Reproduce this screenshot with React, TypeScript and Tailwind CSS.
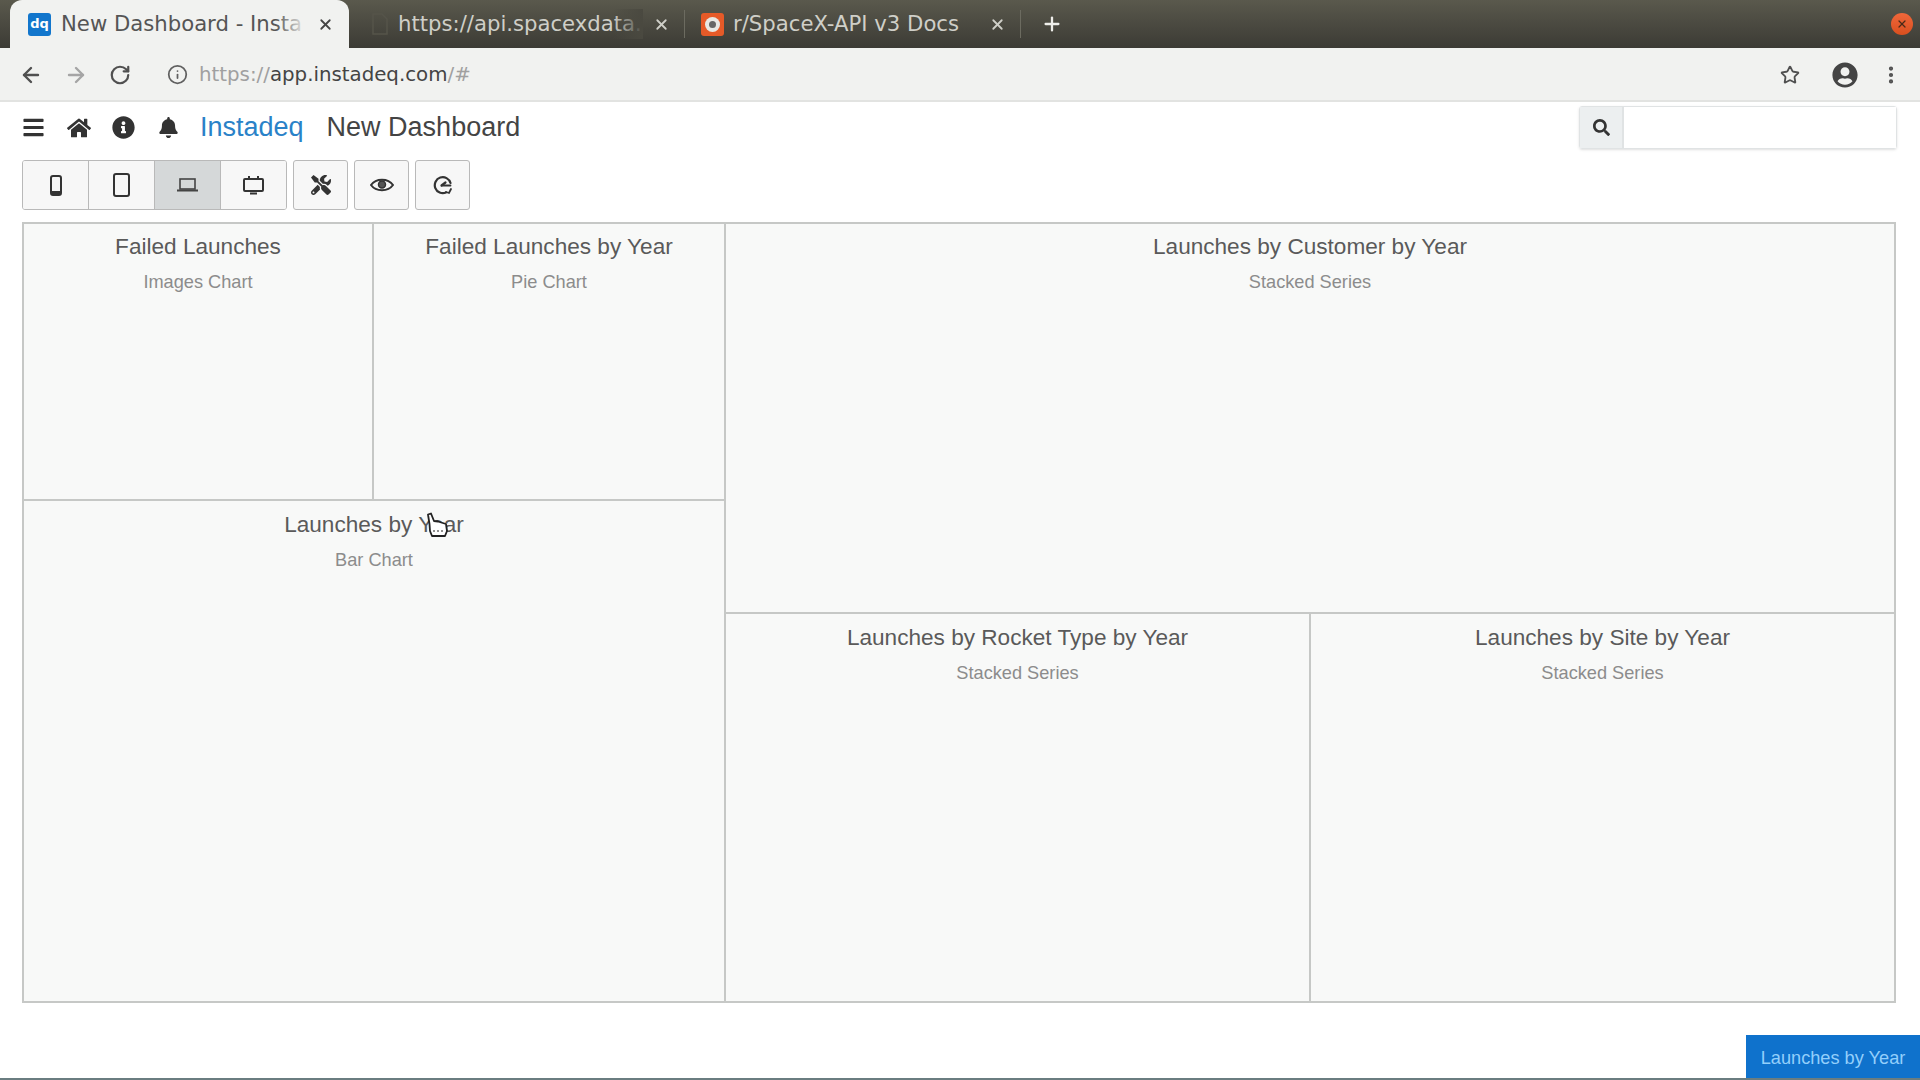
import React from "react";
import { ArrowLeft, ArrowRight, RotateCw, Info, Star, X, Plus, EllipsisVertical } from "lucide-react";
import { FaBars, FaHome, FaInfoCircle, FaBell, FaSearch, FaTools, FaUserCircle } from "react-icons/fa";

function Cell({ title, sub, className }: { title: string; sub: string; className: string }) {
  return (
    <div className={`bg-[#f8f9f8] border-[#c6c8c6] text-center min-w-0 ${className}`}>
      <div className="pt-[8px] text-[22.6px] leading-[30px] text-[#5a5a5a]">{title}</div>
      <div className="mt-[8px] text-[18.2px] leading-[24px] text-[#8c8c8c]">{sub}</div>
    </div>
  );
}

function Tab({ children }: { children: React.ReactNode }) {
  return (
    <div className="flex items-center h-full w-full">
      {children}
      <X className="ml-auto shrink-0 text-[#cfcfc8]" size={17} strokeWidth={2.5} />
      <div className="ml-[14px] w-[1px] h-[28px] bg-[#6c6b60]" />
    </div>
  );
}

export default function App() {
  return (
    <div className="w-[1920px] h-[1080px] overflow-hidden bg-white flex flex-col font-['Liberation_Sans',sans-serif]">
      {/* tab strip */}
      <div className="h-[48px] shrink-0 flex items-stretch pl-[10px] pr-[7px] bg-gradient-to-b from-[#5a594d] to-[#3c3b35] font-['DejaVu_Sans',sans-serif] text-[21.2px]">
        <div className="w-[339px] h-[48px] bg-[#f1f2f0] rounded-t-[12px] flex items-center pl-[18px] pr-[15px] text-[#555]">
          <div className="w-[23px] h-[23px] rounded-[3px] bg-[#1276cc] text-white text-[13px] font-bold flex items-center justify-center shrink-0">dq</div>
          <div className="relative ml-[10px] w-[245px] h-[30px] leading-[30px] overflow-hidden">
            New Dashboard - Insta
            <div className="absolute right-0 top-0 bottom-0 w-[30px] bg-gradient-to-r from-transparent to-[#f1f2f0]" />
          </div>
          <X className="ml-auto shrink-0 text-[#444]" size={17} strokeWidth={2.5} />
        </div>
        <div className="ml-[24px] w-[312px] h-full text-[#cfcfc8]">
          <Tab>
            <svg width="18" height="24" viewBox="0 0 18 24" fill="none" stroke="#55544a" strokeWidth="1.5" className="shrink-0 mr-[9px] ml-[-2px]"><path d="M2 2h9l5 5v15H2z" /></svg>
            <div className="relative w-[245px] h-[30px] leading-[30px] overflow-hidden">
              https://api.spacexdata.
              <div className="absolute right-0 top-0 bottom-0 w-[30px] bg-gradient-to-r from-transparent to-[#4a4940]" />
            </div>
          </Tab>
        </div>
        <div className="ml-[17px] w-[319px] h-full text-[#cfcfc8]">
          <Tab>
            <div className="w-[23px] h-[23px] rounded-[3px] bg-[#e65a28] shrink-0 flex items-center justify-center mr-[9px] ml-[-1px]">
              <div className="w-[15px] h-[15px] rounded-full bg-[#e8e8e4] flex items-center justify-center">
                <div className="w-[7px] h-[7px] rounded-full bg-[#666]" />
              </div>
            </div>
            <div className="whitespace-nowrap">r/SpaceX-API v3 Docs</div>
          </Tab>
        </div>
        <Plus className="ml-[20px] self-center text-[#eeeeea]" size={22} strokeWidth={2.5} />
        <div className="ml-auto self-center w-[22px] h-[22px] rounded-full bg-gradient-to-b from-[#f0673a] to-[#d94f1e] flex items-center justify-center">
          <X size={12} strokeWidth={2.5} className="text-[#4a2a18]" />
        </div>
      </div>

      {/* toolbar */}
      <div className="h-[54px] shrink-0 flex items-center bg-[#f1f2f0] border-b-[2px] border-[#e2e3e1] pl-[19px] pr-[18px] pt-[1px]">
        <ArrowLeft size={24} strokeWidth={2.4} className="text-[#505050]" />
        <ArrowRight size={24} strokeWidth={2.4} className="ml-[21px] text-[#a5a5a5]" />
        <RotateCw size={22} strokeWidth={2.4} className="ml-[21px] text-[#505050]" />
        <Info size={21} strokeWidth={2} className="ml-[36px] text-[#606060]" />
        <div className="ml-[11px] font-['DejaVu_Sans',sans-serif] text-[19.8px] text-[#a0a0a0]">
          https://<span className="text-[#444]">app.instadeq.com</span>/#
        </div>
        <Star size={20} strokeWidth={2.2} className="ml-auto text-[#505050]" />
        <FaUserCircle size={26} className="ml-[32px] text-[#444]" />
        <EllipsisVertical size={22} strokeWidth={2.6} className="ml-[22px] text-[#505050]" />
      </div>

      {/* app header */}
      <div className="h-[47px] shrink-0 mt-[2px] flex items-center pl-[22px] pr-[23px] text-[#333]">
        <FaBars size={23} />
        <FaHome size={24} className="ml-[22px]" />
        <FaInfoCircle size={23} className="ml-[21px]" />
        <FaBell size={21} className="ml-[23px]" />
        <div className="ml-[21px] text-[27px] text-[#2a82c8]">Instadeq</div>
        <div className="ml-[23px] text-[27px] text-[#444]">New Dashboard</div>
        <div className="ml-auto flex h-[43px] w-[318px] rounded-[3px] border border-[#e0e3e4] shadow-sm">
          <div className="w-[44px] bg-[#eceff0] border-r-2 border-[#e0e3e4] flex items-center justify-center">
            <FaSearch size={17} className="text-[#333]" />
          </div>
          <div className="flex-1 bg-white" />
        </div>
      </div>

      {/* buttons */}
      <div className="mt-[9px] h-[50px] shrink-0 flex pl-[22px] gap-[6px] text-[#333]">
        <div className="flex rounded-[3px] border border-[#b9b9b9] overflow-hidden">
          <div className="w-[66px] bg-[#f7f7f7] border-r border-[#b9b9b9] flex items-center justify-center">
            <svg width="12" height="21" viewBox="0 0 12 21" fill="none" stroke="#333" strokeWidth="2"><rect x="1" y="1" width="10" height="19" rx="2" /><path d="M1 17.5h10" strokeWidth="3" /></svg>
          </div>
          <div className="w-[66px] bg-[#f7f7f7] border-r border-[#b9b9b9] flex items-center justify-center">
            <svg width="17" height="24" viewBox="0 0 17 24" fill="none" stroke="#333" strokeWidth="2"><rect x="1" y="1" width="15" height="22" rx="2" /></svg>
          </div>
          <div className="w-[66px] bg-[#d5d8d9] border-r border-[#b9b9b9] flex items-center justify-center">
            <svg width="21" height="14" viewBox="0 0 21 14" fill="none" stroke="#444" strokeWidth="1.6"><rect x="3" y="1" width="15" height="10" /><path d="M0 12.5h21" strokeWidth="2" /></svg>
          </div>
          <div className="w-[65px] bg-[#f7f7f7] flex items-center justify-center">
            <svg width="21" height="19" viewBox="0 0 21 19" fill="none" stroke="#333" strokeWidth="2"><rect x="1" y="3" width="19" height="12" rx="1" /><path d="M6 3V0M15 3V0M7 17.5h7" /></svg>
          </div>
        </div>
        <div className="w-[55px] rounded-[3px] border border-[#b9b9b9] bg-[#f7f7f7] flex items-center justify-center"><FaTools size={20} /></div>
        <div className="w-[55px] rounded-[3px] border border-[#b9b9b9] bg-[#f7f7f7] flex items-center justify-center">
          <svg width="24" height="14" viewBox="0 0 24 14" fill="none" stroke="#333"><path d="M1 7C6 0 18 0 23 7C18 14 6 14 1 7Z" strokeWidth="2" /><circle cx="12" cy="6.5" r="3.5" fill="#555" strokeWidth="1.5" /></svg>
        </div>
        <div className="w-[55px] rounded-[3px] border border-[#b9b9b9] bg-[#f7f7f7] flex items-center justify-center">
          <svg width="21" height="20" viewBox="0 0 21 20" fill="none" stroke="#333" strokeWidth="2.2" strokeLinecap="round">
            <path d="M18.5 8A8 8 0 1 0 14 17.5" />
            <path d="M9.5 10.5l4-3" />
            <path d="M10 10.5h8.5" strokeWidth="1.8" />
            <path d="M19 14l-2 4-3-1" strokeWidth="1.8" />
          </svg>
        </div>
      </div>

      {/* dashboard grid */}
      <div className="mt-[12px] h-[781px] shrink-0 ml-[22px] mr-[24px] flex relative">
        <div className="w-[704px] flex flex-col">
          <div className="h-[279px] flex">
            <Cell title="Failed Launches" sub="Images Chart" className="w-[352px] border-2" />
            <Cell title="Failed Launches by Year" sub="Pie Chart" className="flex-1 border-2 border-l-0" />
          </div>
          <Cell title="Launches by Year" sub="Bar Chart" className="flex-1 border-2 border-t-0 pt-[1px]" />
        </div>
        <div className="flex-1 flex flex-col min-w-0">
          <Cell title="Launches by Customer by Year" sub="Stacked Series" className="h-[392px] border-2 border-l-0" />
          <div className="flex-1 flex">
            <Cell title="Launches by Rocket Type by Year" sub="Stacked Series" className="w-[585px] border-2 border-l-0 border-t-0 pt-[1px]" />
            <Cell title="Launches by Site by Year" sub="Stacked Series" className="flex-1 border-2 border-l-0 border-t-0 pt-[1px]" />
          </div>
        </div>
        <svg className="absolute left-[402px] top-[290px]" width="26" height="26" viewBox="0 0 26 26" fill="#fff" stroke="#222" strokeWidth="1.8" strokeLinejoin="round">
          <path d="M4 2.5 L7 1.5 L10 9 L14 9.5 L22 12 L23 19 L21 24 L8 24 L6 19 L5.5 12 Z" />
          <path d="M9 19h10" strokeDasharray="2 2" strokeWidth="1.2" />
        </svg>
      </div>

      {/* footer */}
      <div className="mt-auto flex justify-end">
        <div className="w-[174px] h-[43px] pt-[5px] bg-[#0f72cc] text-[#93cffb] text-[18.2px] flex items-center justify-center">Launches by Year</div>
      </div>
      <div className="h-[2px] shrink-0 bg-[#6a7d80]" />
    </div>
  );
}
